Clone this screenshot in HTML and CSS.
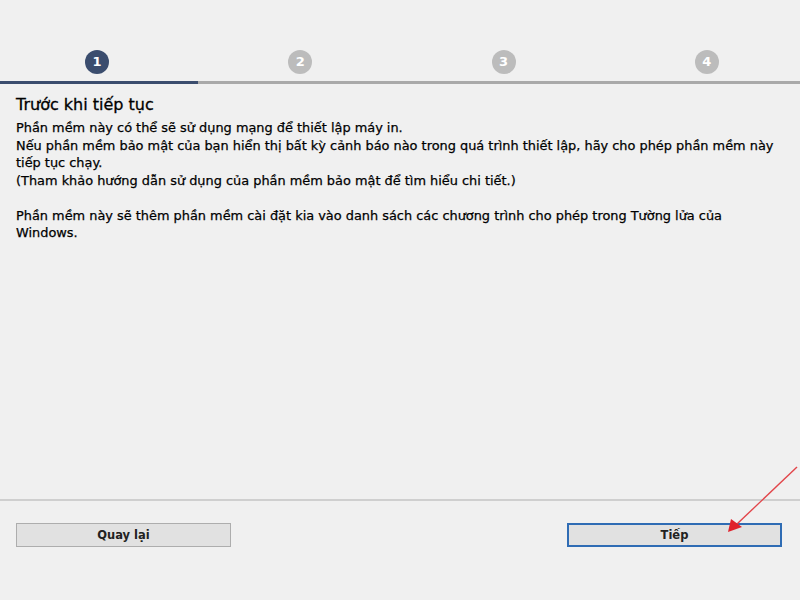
FILE: index.html
```html
<!DOCTYPE html>
<html lang="vi">
<head>
<meta charset="utf-8">
<link rel="stylesheet" href="styles.css">
</head>
<body>
<div class="window">
  <div class="steps">
    <div class="step active"><span class="num">1</span></div>
    <div class="step"><span class="num">2</span></div>
    <div class="step"><span class="num">3</span></div>
    <div class="step"><span class="num">4</span></div>
  </div>
  <div class="progress"><div class="progress-fill"></div></div>
  <div class="content">
    <h1 class="title">Trước khi tiếp tục</h1>
    <p class="para">Phần mềm này có thể sẽ sử dụng mạng để thiết lập máy in.<br>Nếu phần mềm bảo mật của bạn hiển thị bất kỳ cảnh báo nào trong quá trình thiết lập, hãy cho phép phần mềm này tiếp tục chạy.<br>(Tham khảo hướng dẫn sử dụng của phần mềm bảo mật để tìm hiểu chi tiết.)</p>
    <p class="para">Phần mềm này sẽ thêm phần mềm cài đặt kia vào danh sách các chương trình cho phép trong Tường lửa của Windows.</p>
  </div>
  <div class="footer">
    <button class="btn">Quay lại</button>
    <button class="btn primary">Tiếp</button>
  </div>
</div>
<svg class="arrow" width="800" height="600" viewBox="0 0 800 600">
  <line x1="797" y1="467" x2="737" y2="524" stroke="#e2454a" stroke-width="1.4"/>
  <polygon points="728,532 731,519 742,527" fill="#e0222c"/>
</svg>
</body>
</html>
```

FILE: styles.css
```css
html, body {
  margin: 0;
  padding: 0;
  background: #f0f0f0;
}
body {
  width: 800px;
  height: 600px;
  overflow: hidden;
  font-family: "DejaVu Sans", Verdana, sans-serif;
  color: #000;
  position: relative;
}
.window {
  display: flex;
  flex-direction: column;
  height: 600px;
}
.steps {
  display: grid;
  grid-template-columns: repeat(4, 1fr);
  padding-top: 50px;
  margin: 0 -8.4px 0 -4.6px;
}
.step {
  display: flex;
  justify-content: center;
}
.num {
  width: 24px;
  height: 24px;
  border-radius: 50%;
  background: #bcbcbc;
  color: #fff;
  font-weight: bold;
  font-size: 13px;
  line-height: 24px;
  text-align: center;
}
.step.active .num {
  background: #3b4d6e;
}
.progress {
  margin-top: 7px;
  height: 3px;
  background: #a9a9a9;
}
.progress-fill {
  width: 198px;
  height: 3px;
  background: #3b4d6e;
}
.content {
  flex: 1;
  padding: 11px 16px 0 16px;
}
.title {
  margin: 0 0 4px 0;
  font-size: 16px;
  font-weight: normal;
  line-height: 20px;
  color: #000;
  -webkit-text-stroke: 0.3px #000;
}
.para {
  margin: 0 0 17.5px 0;
  font-size: 12.9px;
  line-height: 17.5px;
  -webkit-text-stroke: 0.25px #000;
}
.footer {
  border-top: 2px solid #cfcfcf;
  display: flex;
  justify-content: space-between;
  padding: 22px 18px 53px 16px;
}
.btn {
  width: 215px;
  height: 24px;
  background: #e1e1e1;
  border: 1px solid #adadad;
  font-family: "DejaVu Sans", Verdana, sans-serif;
  font-size: 11.5px;
  font-weight: bold;
  color: #222;
  padding: 0;
}
.btn.primary {
  border: 2px solid #2f6cb4;
}
.arrow {
  position: absolute;
  left: 0;
  top: 0;
  pointer-events: none;
}
```
